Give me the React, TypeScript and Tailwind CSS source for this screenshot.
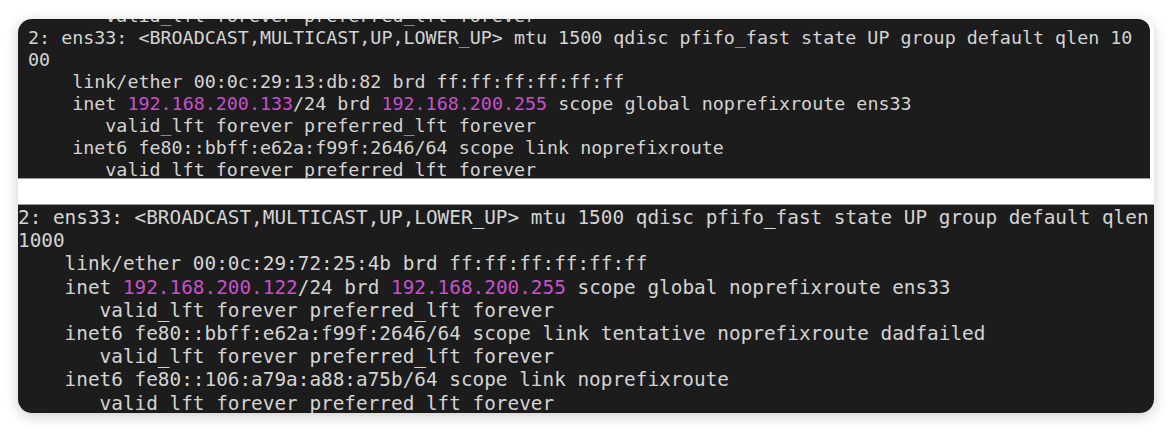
import React from "react";

type Seg = { t: string; m?: boolean };
type Line = Seg[];

const M = "text-[#c94fcf]";

function Lines({ lines }: { lines: Line[] }) {
  return (
    <>
      {lines.map((ln, i) => (
        <div key={i} className="whitespace-pre">
          {ln.map((s, j) =>
            s.m ? (
              <span key={j} className={M}>
                {s.t}
              </span>
            ) : (
              <span key={j}>{s.t}</span>
            )
          )}
        </div>
      ))}
    </>
  );
}

const top: Line[] = [
  [{ t: "       valid_lft forever preferred_lft forever" }],
  [{ t: "2: ens33: <BROADCAST,MULTICAST,UP,LOWER_UP> mtu 1500 qdisc pfifo_fast state UP group default qlen 10" }],
  [{ t: "00" }],
  [{ t: "    link/ether 00:0c:29:13:db:82 brd ff:ff:ff:ff:ff:ff" }],
  [
    { t: "    inet " },
    { t: "192.168.200.133", m: true },
    { t: "/24 brd " },
    { t: "192.168.200.255", m: true },
    { t: " scope global noprefixroute ens33" },
  ],
  [{ t: "       valid_lft forever preferred_lft forever" }],
  [{ t: "    inet6 fe80::bbff:e62a:f99f:2646/64 scope link noprefixroute" }],
  [{ t: "       valid_lft forever preferred_lft forever" }],
];

const bottom: Line[] = [
  [{ t: "2: ens33: <BROADCAST,MULTICAST,UP,LOWER_UP> mtu 1500 qdisc pfifo_fast state UP group default qlen" }],
  [{ t: "1000" }],
  [{ t: "    link/ether 00:0c:29:72:25:4b brd ff:ff:ff:ff:ff:ff" }],
  [
    { t: "    inet " },
    { t: "192.168.200.122", m: true },
    { t: "/24 brd " },
    { t: "192.168.200.255", m: true },
    { t: " scope global noprefixroute ens33" },
  ],
  [{ t: "       valid_lft forever preferred_lft forever" }],
  [{ t: "    inet6 fe80::bbff:e62a:f99f:2646/64 scope link tentative noprefixroute dadfailed" }],
  [{ t: "       valid_lft forever preferred_lft forever" }],
  [{ t: "    inet6 fe80::106:a79a:a88:a75b/64 scope link noprefixroute" }],
  [{ t: "       valid_lft forever preferred_lft forever" }],
];

export default function App() {
  return (
    <div className="w-[1172px] h-[432px] bg-white pt-[19px] pl-[18px] overflow-hidden">
      <div className="w-[1136px] h-[394px] rounded-[14px] overflow-hidden bg-white shadow-[0_3px_14px_rgba(0,0,0,0.2)] flex flex-col">
        <div
          className="w-[1132px] h-[160px] shrink-0 bg-[#1c1c1c] overflow-hidden rounded-tr-[12px] pl-[10px] text-[#d4d4d4] text-[18.35px] leading-[22px] border-b border-[#9a9a9a]"
          style={{ fontFamily: '"DejaVu Sans Mono", monospace' }}
        >
          <div className="mt-[-14.35px]">
            <Lines lines={top} />
          </div>
        </div>
        <div className="h-[25px] shrink-0 bg-white" />
        <div
          className="h-[209px] shrink-0 bg-[#1c1c1c] overflow-hidden pl-0 pt-[1px] text-[#d4d4d4] text-[19.37px] leading-[23.2px] border-t border-[#9a9a9a]"
          style={{ fontFamily: '"DejaVu Sans Mono", monospace' }}
        >
          <Lines lines={bottom} />
        </div>
      </div>
    </div>
  );
}
